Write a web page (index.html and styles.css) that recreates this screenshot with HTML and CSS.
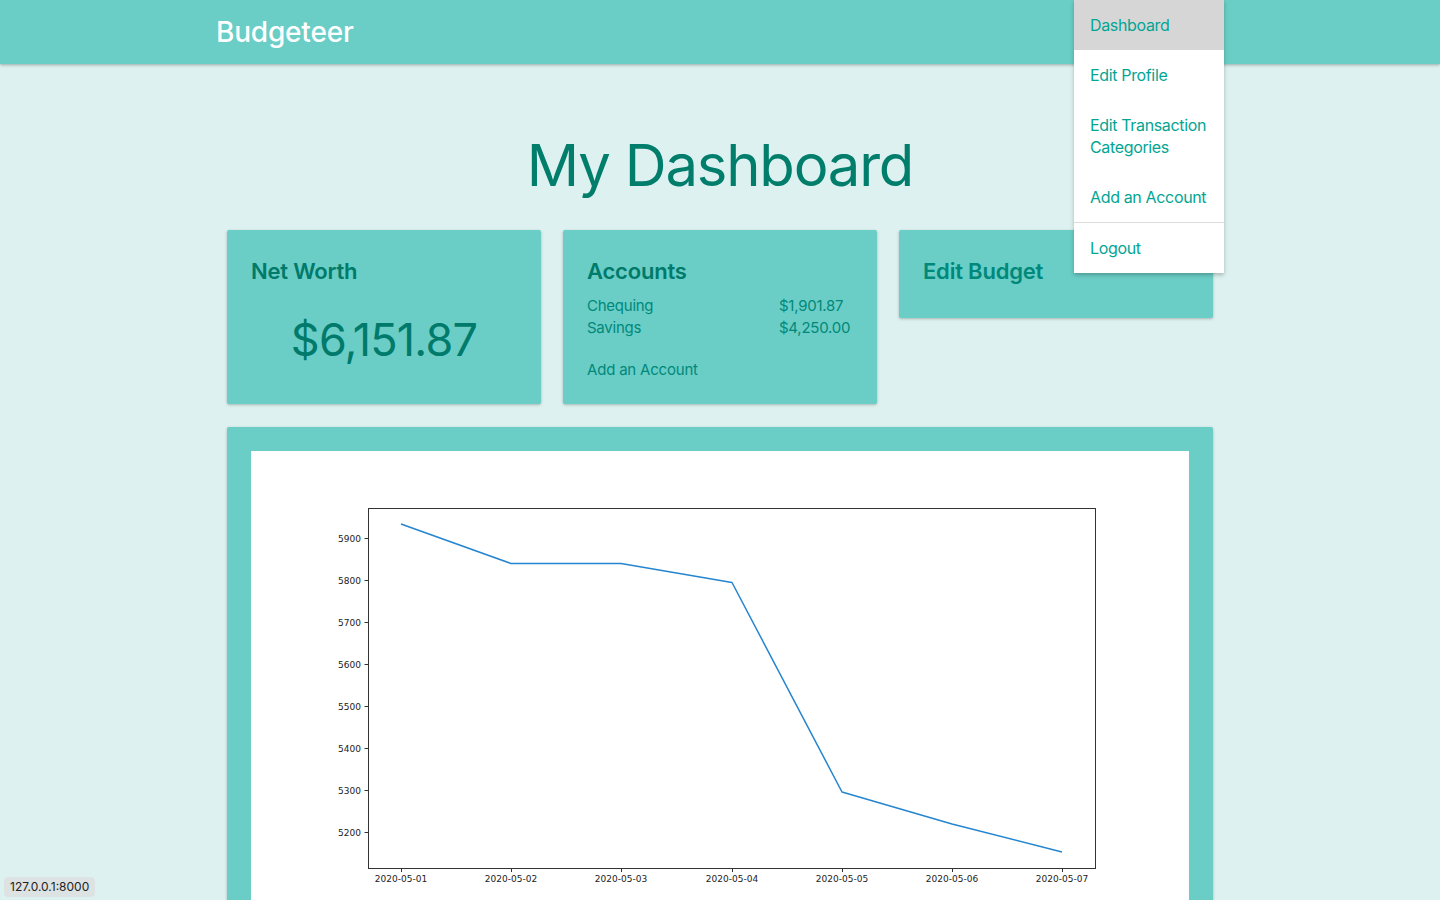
FILE: index.html
```html
<!DOCTYPE html>
<html lang="en">
<head>
<meta charset="utf-8">
<title>Budgeteer</title>
<link rel="stylesheet" href="styles.css">
</head>
<body>
<header class="nav">
  <div class="container nav-inner">
    <a class="brand" href="#">Budgeteer</a>
    <ul class="menu">
      <li class="menu-item active">Dashboard</li>
      <li class="menu-item">Edit Profile</li>
      <li class="menu-item">Edit Transaction<br>Categories</li>
      <li class="menu-item">Add an Account</li>
      <li class="menu-divider"></li>
      <li class="menu-item">Logout</li>
    </ul>
  </div>
</header>
<main class="container">
  <h1 class="title">My Dashboard</h1>
  <section class="cards">
    <div class="card">
      <h2 class="card-title">Net Worth</h2>
      <div class="networth">$6,151.87</div>
    </div>
    <div class="card card-accounts">
      <h2 class="card-title">Accounts</h2>
      <div class="accounts">
        <span>Chequing</span><span>$1,901.87</span>
        <span>Savings</span><span>$4,250.00</span>
      </div>
      <a class="card-link" href="#">Add an Account</a>
    </div>
    <div class="card card-short">
      <h2 class="card-title link-title">Edit Budget</h2>
    </div>
  </section>
  <section class="chart-card">
    <div class="chart">
      <svg width="938" height="480" viewBox="0 0 938 480" xmlns="http://www.w3.org/2000/svg">
        <rect x="117.5" y="57.5" width="727" height="360" fill="none" stroke="#333" stroke-width="1"/>
        <g stroke="#333" stroke-width="1">
          <line x1="113.5" y1="87.5" x2="117.5" y2="87.5"/>
          <line x1="113.5" y1="129.5" x2="117.5" y2="129.5"/>
          <line x1="113.5" y1="171.5" x2="117.5" y2="171.5"/>
          <line x1="113.5" y1="213.5" x2="117.5" y2="213.5"/>
          <line x1="113.5" y1="255.5" x2="117.5" y2="255.5"/>
          <line x1="113.5" y1="297.5" x2="117.5" y2="297.5"/>
          <line x1="113.5" y1="339.5" x2="117.5" y2="339.5"/>
          <line x1="113.5" y1="381.5" x2="117.5" y2="381.5"/>
          <line x1="150.5" y1="417.5" x2="150.5" y2="421"/>
          <line x1="260.5" y1="417.5" x2="260.5" y2="421"/>
          <line x1="370.5" y1="417.5" x2="370.5" y2="421"/>
          <line x1="481.5" y1="417.5" x2="481.5" y2="421"/>
          <line x1="591.5" y1="417.5" x2="591.5" y2="421"/>
          <line x1="701.5" y1="417.5" x2="701.5" y2="421"/>
          <line x1="811.5" y1="417.5" x2="811.5" y2="421"/>
        </g>
        <g class="ylab" text-anchor="end">
          <text x="110" y="91">5900</text>
          <text x="110" y="133">5800</text>
          <text x="110" y="175">5700</text>
          <text x="110" y="217">5600</text>
          <text x="110" y="259">5500</text>
          <text x="110" y="301">5400</text>
          <text x="110" y="343">5300</text>
          <text x="110" y="385">5200</text>
        </g>
        <g class="xlab" text-anchor="middle">
          <text x="150" y="431">2020-05-01</text>
          <text x="260" y="431">2020-05-02</text>
          <text x="370" y="431">2020-05-03</text>
          <text x="481" y="431">2020-05-04</text>
          <text x="591" y="431">2020-05-05</text>
          <text x="701" y="431">2020-05-06</text>
          <text x="811" y="431">2020-05-07</text>
        </g>
        <polyline points="150,73 260,112.5 370,112.5 481,131.5 591,341 701,373 811,401" fill="none" stroke="#2585cf" stroke-width="1.5" stroke-linejoin="round"/>
      </svg>
    </div>
  </section>
</main>
<div class="status">127.0.0.1:8000</div>
</body>
</html>
```
FILE: styles.css
```css
* { box-sizing: border-box; }
html, body { margin: 0; padding: 0; }
body {
  background: #ddf2f0;
  font-family: Inter, "Noto Sans", sans-serif;
  color: #007a6a;
  height: 900px;
  overflow: hidden;
}
a { text-decoration: none; }
.container {
  width: 1008px;
  margin: 0 auto;
}
.nav {
  background: #6acdc6;
  height: 64px;
  box-shadow: 0 1px 3px rgba(0,0,0,0.3);
  position: relative;
  z-index: 5;
}
.nav-inner {
  position: relative;
  height: 64px;
  display: flex;
  align-items: center;
}
.brand {
  color: #fff;
  font-size: 28px;
  font-weight: 500;
  letter-spacing: -0.2px;
  margin-top: -1px;
}
.menu {
  position: absolute;
  top: 0;
  right: 0;
  width: 150px;
  margin: 0;
  padding: 0;
  list-style: none;
  background: #fff;
  box-shadow: 0 2px 4px rgba(0,0,0,0.25);
}
.menu-item {
  padding: 14px 8px 14px 16px;
  font-size: 16px;
  line-height: 22px;
  letter-spacing: -0.35px;
  white-space: nowrap;
  color: #02a594;
}
.menu-item.active { background: #d6d6d6; }
.menu-divider {
  height: 1px;
  background: #dcdcdc;
}
.title {
  margin: 65px 0 29px;
  text-align: center;
  font-size: 58px;
  line-height: 72px;
  font-weight: 400;
  letter-spacing: -1.2px;
  color: #007d6b;
}
.cards {
  display: grid;
  grid-template-columns: repeat(3, 1fr);
  gap: 22px;
  padding: 0 11px;
  align-items: start;
}
.card {
  background: #6acdc6;
  padding: 26px 24px 24px;
  box-shadow: 0 1px 3px rgba(0,0,0,0.25);
  border-radius: 2px;
}
.card-accounts { padding-bottom: 23px; }
.card-short { padding-bottom: 32px; }
.card-title {
  margin: 0;
  font-size: 22px;
  line-height: 30px;
  font-weight: 600;
  color: #007a6a;
  letter-spacing: -0.2px;
}
.link-title { color: #00897a; }
.networth {
  margin-top: 26px;
  padding-bottom: 12px;
  text-align: center;
  font-size: 45px;
  line-height: 56px;
  letter-spacing: -0.8px;
  color: #007a6a;
}
.accounts {
  margin-top: 9px;
  display: grid;
  grid-template-columns: 1fr 74px;
  font-size: 15px;
  line-height: 22px;
  letter-spacing: -0.25px;
  color: #00897a;
}
.card-link {
  display: block;
  margin-top: 20px;
  font-size: 15px;
  line-height: 22px;
  letter-spacing: -0.2px;
  color: #00897a;
}
.chart-card {
  margin: 23px 11px 0;
  background: #6acdc6;
  padding: 24px 24px 0;
  height: 500px;
  box-shadow: 0 1px 3px rgba(0,0,0,0.25);
  border-radius: 2px;
}
.chart {
  background: #fff;
  height: 476px;
}
.chart svg { display: block; }
.ylab text, .xlab text {
  font-family: "DejaVu Sans", sans-serif;
  font-size: 9px;
  fill: #222;
}
.status {
  position: fixed;
  left: 4px;
  bottom: 3px;
  background: #dde3e2;
  color: #222;
  font-family: Inter, sans-serif;
  font-size: 12px;
  line-height: 20px;
  padding: 0 6px;
  border-radius: 4px;
}
```
